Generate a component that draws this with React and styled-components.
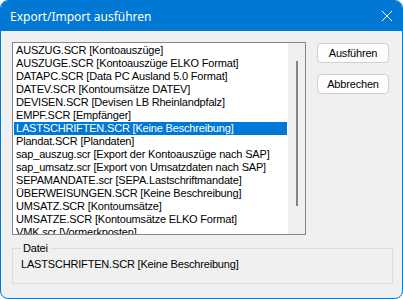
import React from 'react';
import styled, { createGlobalStyle } from 'styled-components';

const GlobalStyle = createGlobalStyle`
html, body {
    margin: 0;
    padding: 0;
    background: #ffffff;
}
* {
    box-sizing: border-box;
}
`;

const Window = styled.div`
width: 403px;
height: 299px;
border: solid 1px #0078d4;
border-radius: 8px;
background: #f0f0f0;
overflow: hidden;
display: flex;
flex-direction: column;
font-family: 'Liberation Sans', Arial, sans-serif;
font-size: 11px;
color: #000;
`;

const TitleBar = styled.div`
height: 30px;
flex: none;
background: #0078d4;
color: #ffffff;
display: flex;
align-items: center;
justify-content: space-between;
padding: 0 9px 0 9px;
font-family: 'Noto Sans', 'Open Sans', sans-serif;
font-size: 12px;
`;

const CloseButton = styled.div`
width: 12px;
height: 12px;
display: flex;
`;

const Body = styled.div`
flex: 1;
padding: 11px 9px 0 11px;
display: flex;
flex-direction: column;
letter-spacing: -0.18px;
`;

const TopRow = styled.div`
display: flex;
gap: 11px;
`;

const ListBox = styled.div`
width: 294px;
height: 193px;
border: solid 1px #828790;
background: #ffffff;
display: flex;
overflow: hidden;
`;

const Items = styled.div`
flex: 1;
padding: 1px 1px 0 1px;
overflow: hidden;
`;

const Item = styled.div`
height: 13px;
line-height: 13px;
padding-left: 2px;
white-space: nowrap;
background: ${props => props.selected ? '#0078d7' : 'transparent'};
color: ${props => props.selected ? '#ffffff' : '#000000'};
`;

const ScrollTrack = styled.div`
width: 17px;
flex: none;
background: #f0f0f0;
display: flex;
justify-content: center;
padding-top: 18px;
`;

const ScrollThumb = styled.div`
width: 2px;
height: 145px;
background: #858585;
margin-left: 1px;
`;

const ButtonColumn = styled.div`
display: flex;
flex-direction: column;
gap: 11px;
padding-top: 1px;
`;

const Button = styled.button`
width: 72px;
height: 20px;
background: #fdfdfd;
border: solid 1px #d0d0d0;
border-radius: 4px;
font-family: 'Liberation Sans', Arial, sans-serif;
font-size: 11px;
letter-spacing: -0.18px;
color: #000;
padding: 0;
`;

const Group = styled.fieldset`
margin: 7px 0 0 0;
width: 381px;
height: 42px;
padding: 4px 8px 0 8px;
border: solid 1px #dcdcdc;
`;

const GroupLabel = styled.legend`
padding: 0 2px;
font-size: 11px;
`;

const items = [
    'AUSZUG.SCR [Kontoauszüge]',
    'AUSZUGE.SCR [Kontoauszüge ELKO Format]',
    'DATAPC.SCR [Data PC Ausland 5.0 Format]',
    'DATEV.SCR [Kontoumsätze DATEV]',
    'DEVISEN.SCR [Devisen LB Rheinlandpfalz]',
    'EMPF.SCR [Empfänger]',
    'LASTSCHRIFTEN.SCR [Keine Beschreibung]',
    'Plandat.SCR [Plandaten]',
    'sap_auszug.scr [Export der Kontoauszüge nach SAP]',
    'sap_umsatz.scr [Export von Umsatzdaten nach SAP]',
    'SEPAMANDATE.scr [SEPA.Lastschriftmandate]',
    'ÜBERWEISUNGEN.SCR [Keine Beschreibung]',
    'UMSATZ.SCR [Kontoumsätze]',
    'UMSATZE.SCR [Kontoumsätze ELKO Format]',
    'VMK.scr [Vormerkposten]',
];

function App() {
    const selected = 6;
    return (
        <>
            <GlobalStyle />
            <Window>
                <TitleBar>
                    <span>Export/Import ausführen</span>
                    <CloseButton>
                        <svg width="12" height="12" viewBox="0 0 12 12">
                            <path d="M1 1 L11 11 M11 1 L1 11" stroke="#ffffff" strokeWidth="1" fill="none" />
                        </svg>
                    </CloseButton>
                </TitleBar>
                <Body>
                    <TopRow>
                        <ListBox>
                            <Items>
                                {items.map((text, i) => (
                                    <Item key={text} selected={i === selected}>{text}</Item>
                                ))}
                            </Items>
                            <ScrollTrack>
                                <ScrollThumb />
                            </ScrollTrack>
                        </ListBox>
                        <ButtonColumn>
                            <Button>Ausführen</Button>
                            <Button>Abbrechen</Button>
                        </ButtonColumn>
                    </TopRow>
                    <Group>
                        <GroupLabel>Datei</GroupLabel>
                        {items[selected]}
                    </Group>
                </Body>
            </Window>
        </>
    );
}

export default App;
